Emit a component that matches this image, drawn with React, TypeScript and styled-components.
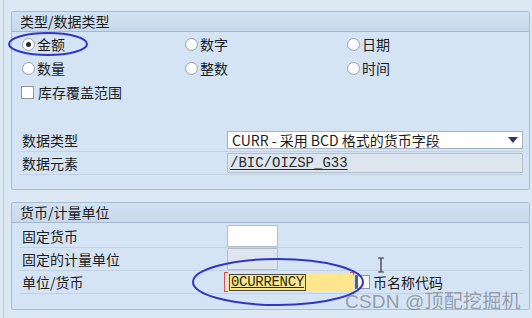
import React from "react";
import styled, { createGlobalStyle } from "styled-components";

const Global = createGlobalStyle`
  html, body { margin: 0; padding: 0; }
  body { font-family: "Noto Sans CJK SC", "Noto Sans", sans-serif; }
`;

const Page = styled.div`
  position: relative;
  width: 532px;
  height: 318px;
  overflow: hidden;
  background: #dfe9f4;
  padding-left: 3px;
  box-sizing: border-box;
`;

const Frame = styled.div`
  height: 100%;
  box-sizing: border-box;
  border-left: 1px solid #b9c7d5;
  padding: 11px 1px 0 7px;
  background: #dce8f4;
`;

const Group = styled.section<{ $h: number; $mt?: number }>`
  width: 519px;
  height: ${(p) => p.$h}px;
  margin-top: ${(p) => p.$mt ?? 0}px;
  box-sizing: border-box;
  border: 1px solid #a9bdd1;
  border-radius: 2px;
  background: #d4e4f4;
  display: flex;
  flex-direction: column;
`;

const GroupHeader = styled.div`
  height: 19px;
  flex: none;
  border-bottom: 1px solid #a3b8cc;
  background: linear-gradient(#d3e2f1, #c7d9eb);
  padding-left: 8px;
  font-size: 14px;
  line-height: 19px;
  color: #1c1c1c;
`;

const RadioGrid = styled.div`
  display: grid;
  grid-template-columns: 163px 162px 1fr;
  grid-auto-rows: 24px;
  padding-left: 10px;
`;

const Option = styled.label<{ $span?: number }>`
  display: flex;
  align-items: center;
  gap: 2px;
  font-size: 14px;
  color: #1c1c1c;
  grid-column: span ${(p) => p.$span ?? 1};
`;

const Radio = styled.span<{ $on?: boolean }>`
  width: 13px;
  height: 13px;
  box-sizing: border-box;
  border-radius: 50%;
  border: 1px solid #9ea4aa;
  background: radial-gradient(circle at 50% 40%, #ffffff 50%, #e6e9ec 100%);
  display: flex;
  align-items: center;
  justify-content: center;
  &::after {
    content: "";
    width: 5px;
    height: 5px;
    border-radius: 50%;
    background: ${(p) => (p.$on ? "#2a2a2a" : "transparent")};
  }
`;

const Check = styled.span`
  width: 13px;
  height: 13px;
  box-sizing: border-box;
  border: 1px solid #8e959c;
  background: #fff;
  margin-left: -1px;
  margin-right: 2px;
`;

const Fields = styled.div<{ $mt: number }>`
  margin-top: ${(p) => p.$mt}px;
  padding: 0 6px 0 8px;
`;

const Row = styled.div`
  height: 23px;
  box-sizing: border-box;
  border-bottom: 1px solid #c2d2e2;
  display: flex;
  align-items: center;
`;

const Label = styled.div`
  width: 205px;
  flex: none;
  padding-left: 2px;
  font-size: 14px;
  color: #1c1c1c;
`;

const Select = styled.div`
  width: 297px;
  height: 18px;
  box-sizing: border-box;
  background: #fff;
  border: 1px solid #a7b3bf;
  display: flex;
  align-items: center;
  justify-content: space-between;
  padding: 0 4px 0 4px;
  font-family: "Noto Sans CJK SC", "Liberation Sans", sans-serif;
  font-size: 14px;
  color: #1c1c1c;
  white-space: nowrap;
`;

const Display = styled.div<{ $w: number; $h: number; $bg?: string }>`
  width: ${(p) => p.$w}px;
  height: ${(p) => p.$h}px;
  box-sizing: border-box;
  background: ${(p) => p.$bg ?? "#dde6ef"};
  border: 1px solid #b2bfcb;
  border-radius: 1px;
  display: flex;
  align-items: center;
  padding-left: 2px;
  font-family: "Liberation Mono", monospace;
  font-size: 14px;
  color: #2a2a2a;
`;

const Underlined = styled.span`
  text-decoration: underline;
  text-underline-offset: 2px;
`;

const FocusWrap = styled.div`
  position: relative;
  margin-left: 1px;
  &::before,
  &::after {
    content: "";
    position: absolute;
    width: 3px;
    border: 1px solid #d9534f;
  }
  &::before {
    left: -4px;
    top: -1px;
    height: 18px;
    border-right: none;
  }
  &::after {
    right: -1px;
    top: -1px;
    height: 2px;
    border-left: none;
    border-bottom: none;
  }
`;

const YellowField = styled.div`
  width: 125px;
  height: 19px;
  box-sizing: border-box;
  background: #fde68e;
  display: flex;
  align-items: center;
  padding-left: 1px;
`;

const Selected = styled.span`
  border: 1px solid #4a4a3a;
  padding: 0 1px;
  line-height: 15px;
  font-family: "Liberation Mono", monospace;
  font-size: 14px;
  color: #2b2b10;
  text-decoration: underline;
  text-underline-offset: 1px;
  letter-spacing: -0.3px;
`;

const SmallBox = styled.span`
  width: 15px;
  height: 14px;
  box-sizing: border-box;
  margin-left: 2px;
  border: 1px solid #8d949b;
  border-left: 3px solid #5c5f63;
  background: #f4f6f8;
`;

const Trailing = styled.span`
  margin-left: 3px;
  font-size: 14px;
  color: #1c1c1c;
`;

const Overlay = styled.svg`
  position: absolute;
  left: 0;
  top: 0;
  pointer-events: none;
`;

const Watermark = styled.div`
  position: absolute;
  left: 345px;
  top: 286px;
  font-family: "Liberation Sans", "Noto Sans CJK SC", sans-serif;
  font-size: 19px;
  color: rgba(105, 110, 118, 0.62);
  white-space: nowrap;
  letter-spacing: 0.2px;
`;

export default function App() {
  return (
    <>
      <Global />
      <Page>
        <Frame>
          <Group $h={179}>
            <GroupHeader>类型/数据类型</GroupHeader>
            <RadioGrid>
              <Option><Radio $on />金额</Option>
              <Option><Radio />数字</Option>
              <Option><Radio />日期</Option>
              <Option><Radio />数量</Option>
              <Option><Radio />整数</Option>
              <Option><Radio />时间</Option>
              <Option $span={3}><Check />库存覆盖范围</Option>
            </RadioGrid>
            <Fields $mt={25}>
              <Row>
                <Label>数据类型</Label>
                <Select>
                  <span>CURR - 采用 BCD 格式的货币字段</span>
                  <svg width="10" height="6" viewBox="0 0 10 6">
                    <path d="M0 0H10L5 6Z" fill="#2e3a5a" />
                  </svg>
                </Select>
              </Row>
              <Row>
                <Label>数据元素</Label>
                <Display $w={297} $h={20}>
                  <Underlined>/BIC/OIZSP_G33</Underlined>
                </Display>
              </Row>
            </Fields>
          </Group>
          <Group $h={108} $mt={12}>
            <GroupHeader>货币/计量单位</GroupHeader>
            <Fields $mt={2}>
              <Row>
                <Label>固定货币</Label>
                <Display $w={51} $h={22} $bg="#ffffff" />
              </Row>
              <Row>
                <Label>固定的计量单位</Label>
                <Display $w={51} $h={22} />
              </Row>
              <Row>
                <Label>单位/货币</Label>
                <FocusWrap>
                  <YellowField>
                    <Selected>0CURRENCY</Selected>
                  </YellowField>
                </FocusWrap>
                <SmallBox />
                <Trailing>币名称代码</Trailing>
              </Row>
            </Fields>
          </Group>
        </Frame>
        <Watermark>CSDN @顶配挖掘机</Watermark>
        <Overlay width="532" height="318" viewBox="0 0 532 318">
          <ellipse cx="48" cy="44" rx="39" ry="11" fill="none" stroke="#3236c4" strokeWidth="2" />
          <ellipse cx="278" cy="282" rx="85" ry="23" fill="none" stroke="#3236c4" strokeWidth="2" />
          <path d="M378 258h6M381 258v14M378 272h6" stroke="#333" strokeWidth="1.2" fill="none" />
        </Overlay>
      </Page>
    </>
  );
}
